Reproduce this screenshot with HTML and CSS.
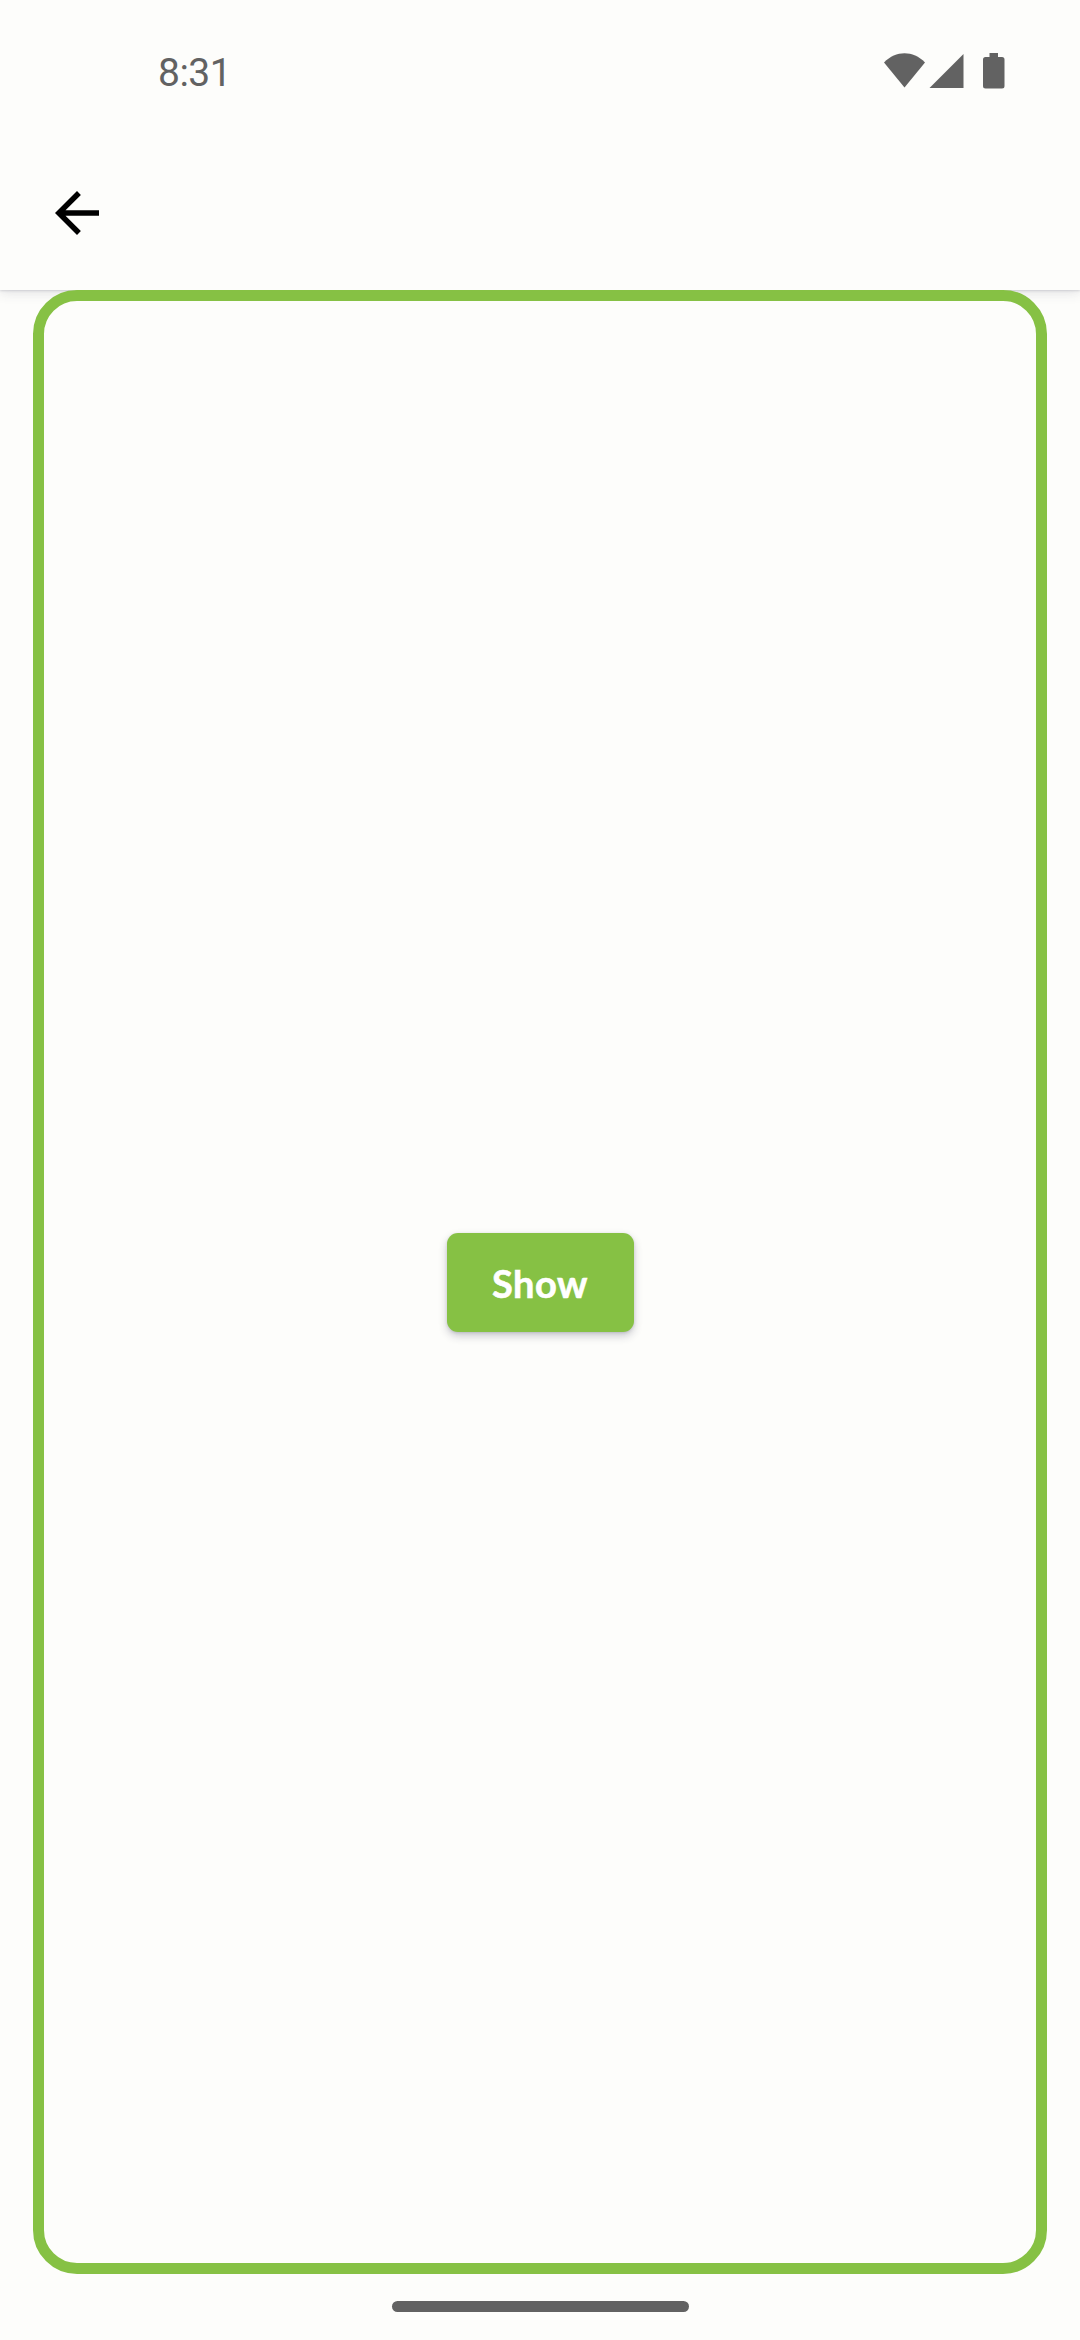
FILE: index.html
```html
<!DOCTYPE html>
<html lang="en">
<head>
<meta charset="utf-8">
<title>Show</title>
<link rel="stylesheet" href="styles.css">
</head>
<body>
<div class="screen">
  <header class="top">
    <div class="status">
      <span class="time">8:31</span>
      <svg class="icons" width="122" height="38" viewBox="0 0 122 38" fill="#626262">
        <path d="M0 9.5C12-2.8 29-2.8 41 9.5L20.5 34.5Z"/>
        <path d="M79.5 1V35H45.5Z"/>
        <path d="M105.5 0h8.5v4h4a2.500 2.500 0 0 1 2.500 2.500v26.500a2.500 2.500 0 0 1-2.500 2.500h-16.500a2.500 2.500 0 0 1-2.500-2.500v-26.500a2.500 2.500 0 0 1 2.500-2.500h4z"/>
      </svg>
    </div>
    <div class="toolbar">
      <svg class="back" viewBox="0 0 24 24" width="66" height="66"><path d="M20 11H7.830l5.590-5.590L12 4l-8 8 8 8 1.410-1.410L7.830 13H20v-2z"/></svg>
    </div>
  </header>
  <main class="frame"><button class="show">Show</button></main>
  <footer class="nav"><div class="handle"></div></footer>
</div>
</body>
</html>
```
FILE: styles.css
```css
* { box-sizing: border-box; }
body { margin: 0; background: #fdfdfb; }
.screen {
  width: 1080px;
  height: 2340px;
  display: flex;
  flex-direction: column;
  background: #fdfdfb;
  overflow: hidden;
}
.top {
  height: 290px;
  box-shadow: 0 2px 12px rgba(60, 60, 90, 0.16), 0 1px 2px rgba(60, 60, 90, 0.16);
  clip-path: inset(0 0 -30px 0);
}
.status {
  height: 136px;
  padding: 53px 74px 0 158px;
  display: flex;
  justify-content: space-between;
}
.time {
  font: 400 39px/40px Roboto, sans-serif;
  letter-spacing: -0.5px;
  color: #626262;
}
.toolbar { height: 154px; padding: 44px; }
.back { display: block; fill: #000; }
.frame {
  position: relative;
  height: 1984px;
  margin: 0 33px;
  border: 11px solid #86c144;
  border-radius: 44px;
  background: #fdfdfb;
  display: flex;
  align-items: center;
  justify-content: center;
}
.show {
  width: 187px;
  height: 99px;
  padding: 1px 0 0;
  border: 0;
  border-radius: 11px;
  background: #86c144;
  color: #fff;
  font: 700 38px/1 Lato, sans-serif;
  -webkit-text-stroke: 0.6px #fff;
  letter-spacing: 0.5px;
  box-shadow: 0 4px 8px rgba(40, 40, 70, 0.24), 0 1px 3px rgba(40, 40, 70, 0.14);
}
.nav {
  flex: 1;
  padding-top: 27px;
  display: flex;
  justify-content: center;
}
.handle {
  width: 297px;
  height: 11px;
  border-radius: 6px;
  background: #626262;
}
```
